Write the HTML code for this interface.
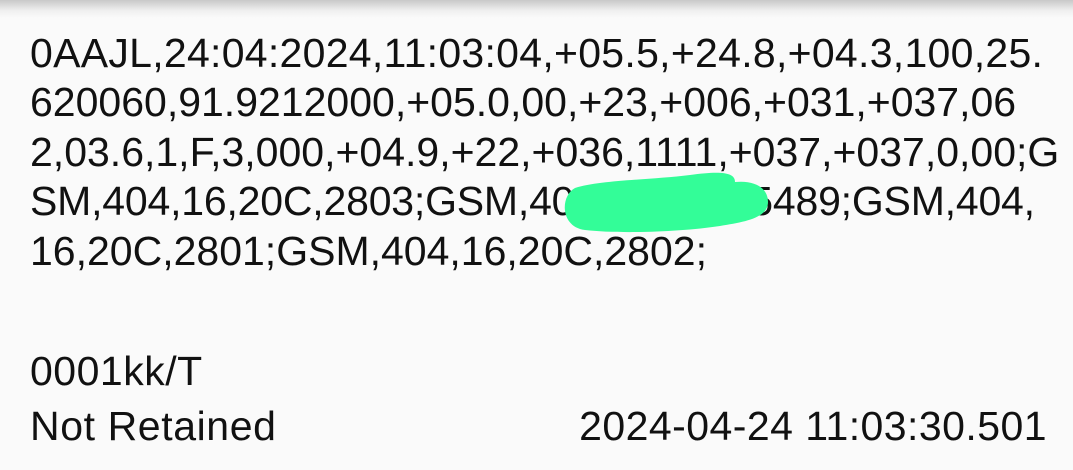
<!DOCTYPE html>
<html><head><meta charset="utf-8"><style>
html,body{margin:0;padding:0;}
body{width:1073px;height:470px;overflow:hidden;background:#fafafa;position:relative;font-family:"Liberation Sans",Roboto,sans-serif;color:#111;}
.sh{position:absolute;left:0;top:0;width:1073px;height:18px;background:linear-gradient(#c8c8c8,#f0f0f0 60%,#fafafa);}
.l{position:absolute;left:30px;font-size:41px;white-space:nowrap;line-height:1;}
svg{position:absolute;left:0;top:0;}
</style></head><body>
<div class="sh"></div>
<div class="l" style="top:33px;letter-spacing:0.28px">0AAJL,24:04:2024,11:03:04,+05.5,+24.8,+04.3,100,25.</div>
<div class="l" style="top:82px">620060,91.9212000,+05.0,00,+23,+006,+031,+037,06</div>
<div class="l" style="top:132px">2,03.6,1,F,3,000,+04.9,+22,+036,1111,+037,+037,0,00;G</div>
<div class="l" style="top:181px;letter-spacing:-0.2px">SM,404,16,20C,2803;GSM,404,16,20C,5489;GSM,404,</div>
<div class="l" style="top:231px">16,20C,2801;GSM,404,16,20C,2802;</div>
<div class="l" style="top:351px;letter-spacing:0.5px">0001kk/T</div>
<div class="l" style="top:406px;letter-spacing:0.6px">Not Retained</div>
<div class="l" style="top:406px;left:auto;right:26px;letter-spacing:0.45px">2024-04-24 11:03:30.501</div>
<svg width="1073" height="470"><path d="M575 188 C600 180 650 180 690 175 C720 171 735 172 735 182 C755 180 768 188 768 202 C768 218 745 222 720 226 C680 232 620 234 585 230 C560 227 560 196 575 188 Z" fill="#33fd98"/></svg>
</body></html>
